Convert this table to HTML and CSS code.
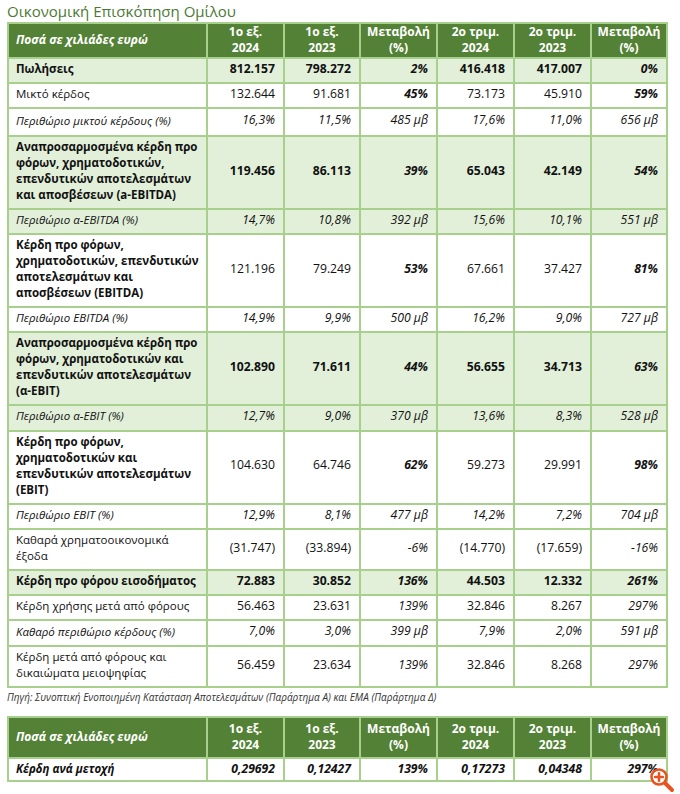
FILE: index.html
```html
<!DOCTYPE html>
<html lang="el">
<head>
<meta charset="utf-8">
<title>Οικονομική Επισκόπηση Ομίλου</title>
<link rel="stylesheet" href="styles.css">
</head>
<body>
<div class="page">
  <h1 class="title">Οικονομική Επισκόπηση Ομίλου</h1>
  <table class="fin">
    <colgroup>
      <col class="c-label"><col class="c-num"><col class="c-num2"><col class="c-num"><col class="c-num"><col class="c-num"><col class="c-num2">
    </colgroup>
    <thead>
      <tr class="head">
        <th class="h-label">Ποσά σε χιλιάδες ευρώ</th>
        <th>1ο εξ.<br>2024</th>
        <th>1ο εξ.<br>2023</th>
        <th>Μεταβολή<br>(%)</th>
        <th>2ο τριμ.<br>2024</th>
        <th>2ο τριμ.<br>2023</th>
        <th>Μεταβολή<br>(%)</th>
      </tr>
    </thead>
    <tbody>
      <tr class="hl b">
        <td class="lbl">Πωλήσεις</td><td>812.157</td><td>798.272</td><td class="chg">2%</td><td>416.418</td><td>417.007</td><td class="chg">0%</td>
      </tr>
      <tr>
        <td class="lbl">Μικτό κέρδος</td><td>132.644</td><td>91.681</td><td class="chg bi">45%</td><td>73.173</td><td>45.910</td><td class="chg bi">59%</td>
      </tr>
      <tr class="it tall">
        <td class="lbl">Περιθώριο μικτού κέρδους (%)</td><td>16,3%</td><td>11,5%</td><td>485 μβ</td><td>17,6%</td><td>11,0%</td><td>656 μβ</td>
      </tr>
      <tr class="hl b">
        <td class="lbl">Αναπροσαρμοσμένα κέρδη προ<br>φόρων, χρηματοδοτικών,<br>επενδυτικών αποτελεσμάτων<br>και αποσβέσεων (a-EBITDA)</td><td>119.456</td><td>86.113</td><td class="chg">39%</td><td>65.043</td><td>42.149</td><td class="chg">54%</td>
      </tr>
      <tr class="hl it">
        <td class="lbl">Περιθώριο α-EBITDA (%)</td><td>14,7%</td><td>10,8%</td><td>392 μβ</td><td>15,6%</td><td>10,1%</td><td>551 μβ</td>
      </tr>
      <tr>
        <td class="lbl bold">Κέρδη προ φόρων,<br>χρηματοδοτικών, επενδυτικών<br>αποτελεσμάτων και<br>αποσβέσεων (EBITDA)</td><td>121.196</td><td>79.249</td><td class="chg bi">53%</td><td>67.661</td><td>37.427</td><td class="chg bi">81%</td>
      </tr>
      <tr class="it">
        <td class="lbl">Περιθώριο EBITDA (%)</td><td>14,9%</td><td>9,9%</td><td>500 μβ</td><td>16,2%</td><td>9,0%</td><td>727 μβ</td>
      </tr>
      <tr class="hl b">
        <td class="lbl">Αναπροσαρμοσμένα κέρδη προ<br>φόρων, χρηματοδοτικών και<br>επενδυτικών αποτελεσμάτων<br>(α-EBIT)</td><td>102.890</td><td>71.611</td><td class="chg">44%</td><td>56.655</td><td>34.713</td><td class="chg">63%</td>
      </tr>
      <tr class="hl it">
        <td class="lbl">Περιθώριο α-EBIT (%)</td><td>12,7%</td><td>9,0%</td><td>370 μβ</td><td>13,6%</td><td>8,3%</td><td>528 μβ</td>
      </tr>
      <tr>
        <td class="lbl bold">Κέρδη προ φόρων,<br>χρηματοδοτικών και<br>επενδυτικών αποτελεσμάτων<br>(EBIT)</td><td>104.630</td><td>64.746</td><td class="chg bi">62%</td><td>59.273</td><td>29.991</td><td class="chg bi">98%</td>
      </tr>
      <tr class="it">
        <td class="lbl">Περιθώριο EBIT (%)</td><td>12,9%</td><td>8,1%</td><td>477 μβ</td><td>14,2%</td><td>7,2%</td><td>704 μβ</td>
      </tr>
      <tr>
        <td class="lbl">Καθαρά χρηματοοικονομικά<br>έξοδα</td><td>(31.747)</td><td>(33.894)</td><td class="chg ital">-6%</td><td>(14.770)</td><td>(17.659)</td><td class="chg ital">-16%</td>
      </tr>
      <tr class="hl b">
        <td class="lbl">Κέρδη προ φόρου εισοδήματος</td><td>72.883</td><td>30.852</td><td class="chg">136%</td><td>44.503</td><td>12.332</td><td class="chg">261%</td>
      </tr>
      <tr>
        <td class="lbl">Κέρδη χρήσης μετά από φόρους</td><td>56.463</td><td>23.631</td><td class="chg ital">139%</td><td>32.846</td><td>8.267</td><td class="chg ital">297%</td>
      </tr>
      <tr class="it">
        <td class="lbl">Καθαρό περιθώριο κέρδους (%)</td><td>7,0%</td><td>3,0%</td><td>399 μβ</td><td>7,9%</td><td>2,0%</td><td>591 μβ</td>
      </tr>
      <tr>
        <td class="lbl">Κέρδη μετά από φόρους και<br>δικαιώματα μειοψηφίας</td><td>56.459</td><td>23.634</td><td class="chg ital">139%</td><td>32.846</td><td>8.268</td><td class="chg ital">297%</td>
      </tr>
    </tbody>
  </table>
  <p class="source">Πηγή: Συνοπτική Ενοποιημένη Κατάσταση Αποτελεσμάτων (Παράρτημα Α) και ΕΜΑ (Παράρτημα Δ)</p>
  <table class="fin eps">
    <colgroup>
      <col class="c-label"><col class="c-num"><col class="c-num2"><col class="c-num"><col class="c-num"><col class="c-num"><col class="c-num2">
    </colgroup>
    <thead>
      <tr class="head">
        <th class="h-label">Ποσά σε χιλιάδες ευρώ</th>
        <th>1ο εξ.<br>2024</th>
        <th>1ο εξ.<br>2023</th>
        <th>Μεταβολή<br>(%)</th>
        <th>2ο τριμ.<br>2024</th>
        <th>2ο τριμ.<br>2023</th>
        <th>Μεταβολή<br>(%)</th>
      </tr>
    </thead>
    <tbody>
      <tr class="b it">
        <td class="lbl">Κέρδη ανά μετοχή</td><td>0,29692</td><td>0,12427</td><td>139%</td><td>0,17273</td><td>0,04348</td><td>297%</td>
      </tr>
    </tbody>
  </table>
  <svg class="zoom-icon" width="30" height="30" viewBox="0 0 30 30" aria-hidden="true">
    <line x1="17" y1="17" x2="25" y2="25" stroke="#e8531f" stroke-width="4" stroke-linecap="round"/>
    <circle cx="12" cy="12" r="7.5" fill="#ffffff" stroke="#e8531f" stroke-width="2.6"/>
    <path d="M12 8.2 V15.8 M8.2 12 H15.8" stroke="#e8531f" stroke-width="2.6" stroke-linecap="round"/>
  </svg>
</div>
</body>
</html>
```

FILE: styles.css
```css
html, body {
  margin: 0;
  padding: 0;
  background: #ffffff;
}

.page {
  position: relative;
  width: 680px;
  height: 794px;
  padding: 0 0 0 7px;
  box-sizing: border-box;
  font-family: "Open Sans", "Noto Sans", sans-serif;
  color: #111111;
}

.title {
  margin: 0;
  padding-top: 1px;
  height: 21px;
  font-size: 15px;
  line-height: 20px;
  font-weight: 400;
  color: #4b7a33;
  white-space: nowrap;
}

.fin {
  width: 659px;
  table-layout: fixed;
  border-collapse: collapse;
  font-size: 12.2px;
}

.c-label { width: 199px; }
.c-num { width: 77px; }
.c-num2 { width: 76px; }

.fin th,
.fin td {
  border: 2px solid #a8d08d;
  vertical-align: middle;
}

.head th {
  background: #538135;
  color: #ffffff;
  font-weight: 700;
  font-size: 12px;
  line-height: 16.4px;
  padding: 0 3px;
  text-align: center;
}

.head th.h-label {
  text-align: left;
  font-style: italic;
  padding-left: 7px;
}

.fin td {
  padding: 2px 8px 5px 7px;
  line-height: 16.3px;
  text-align: right;
  white-space: nowrap;
}

.fin td.lbl {
  text-align: left;
  font-size: 11.5px;
  line-height: 16px;
}

.tall td {
  padding-top: 3px;
  padding-bottom: 6px;
}

.hl td {
  background: #e2efd9;
}

.b td {
  font-weight: 700;
}

.b td.chg,
.chg.bi {
  font-weight: 700;
  font-style: italic;
}

.bold {
  font-weight: 700;
}

.it td {
  font-style: italic;
}

.ital {
  font-style: italic;
}

.source {
  margin: 0;
  padding-top: 2px;
  height: 26px;
  font-size: 10px;
  line-height: 14px;
  font-style: italic;
  color: #333333;
  white-space: nowrap;
}

.eps .head th {
  padding-top: 3px;
  padding-bottom: 3px;
}

.eps td {
  padding: 2px 8px 3px 7px;
}

.zoom-icon {
  position: absolute;
  left: 647px;
  top: 765px;
}
```
